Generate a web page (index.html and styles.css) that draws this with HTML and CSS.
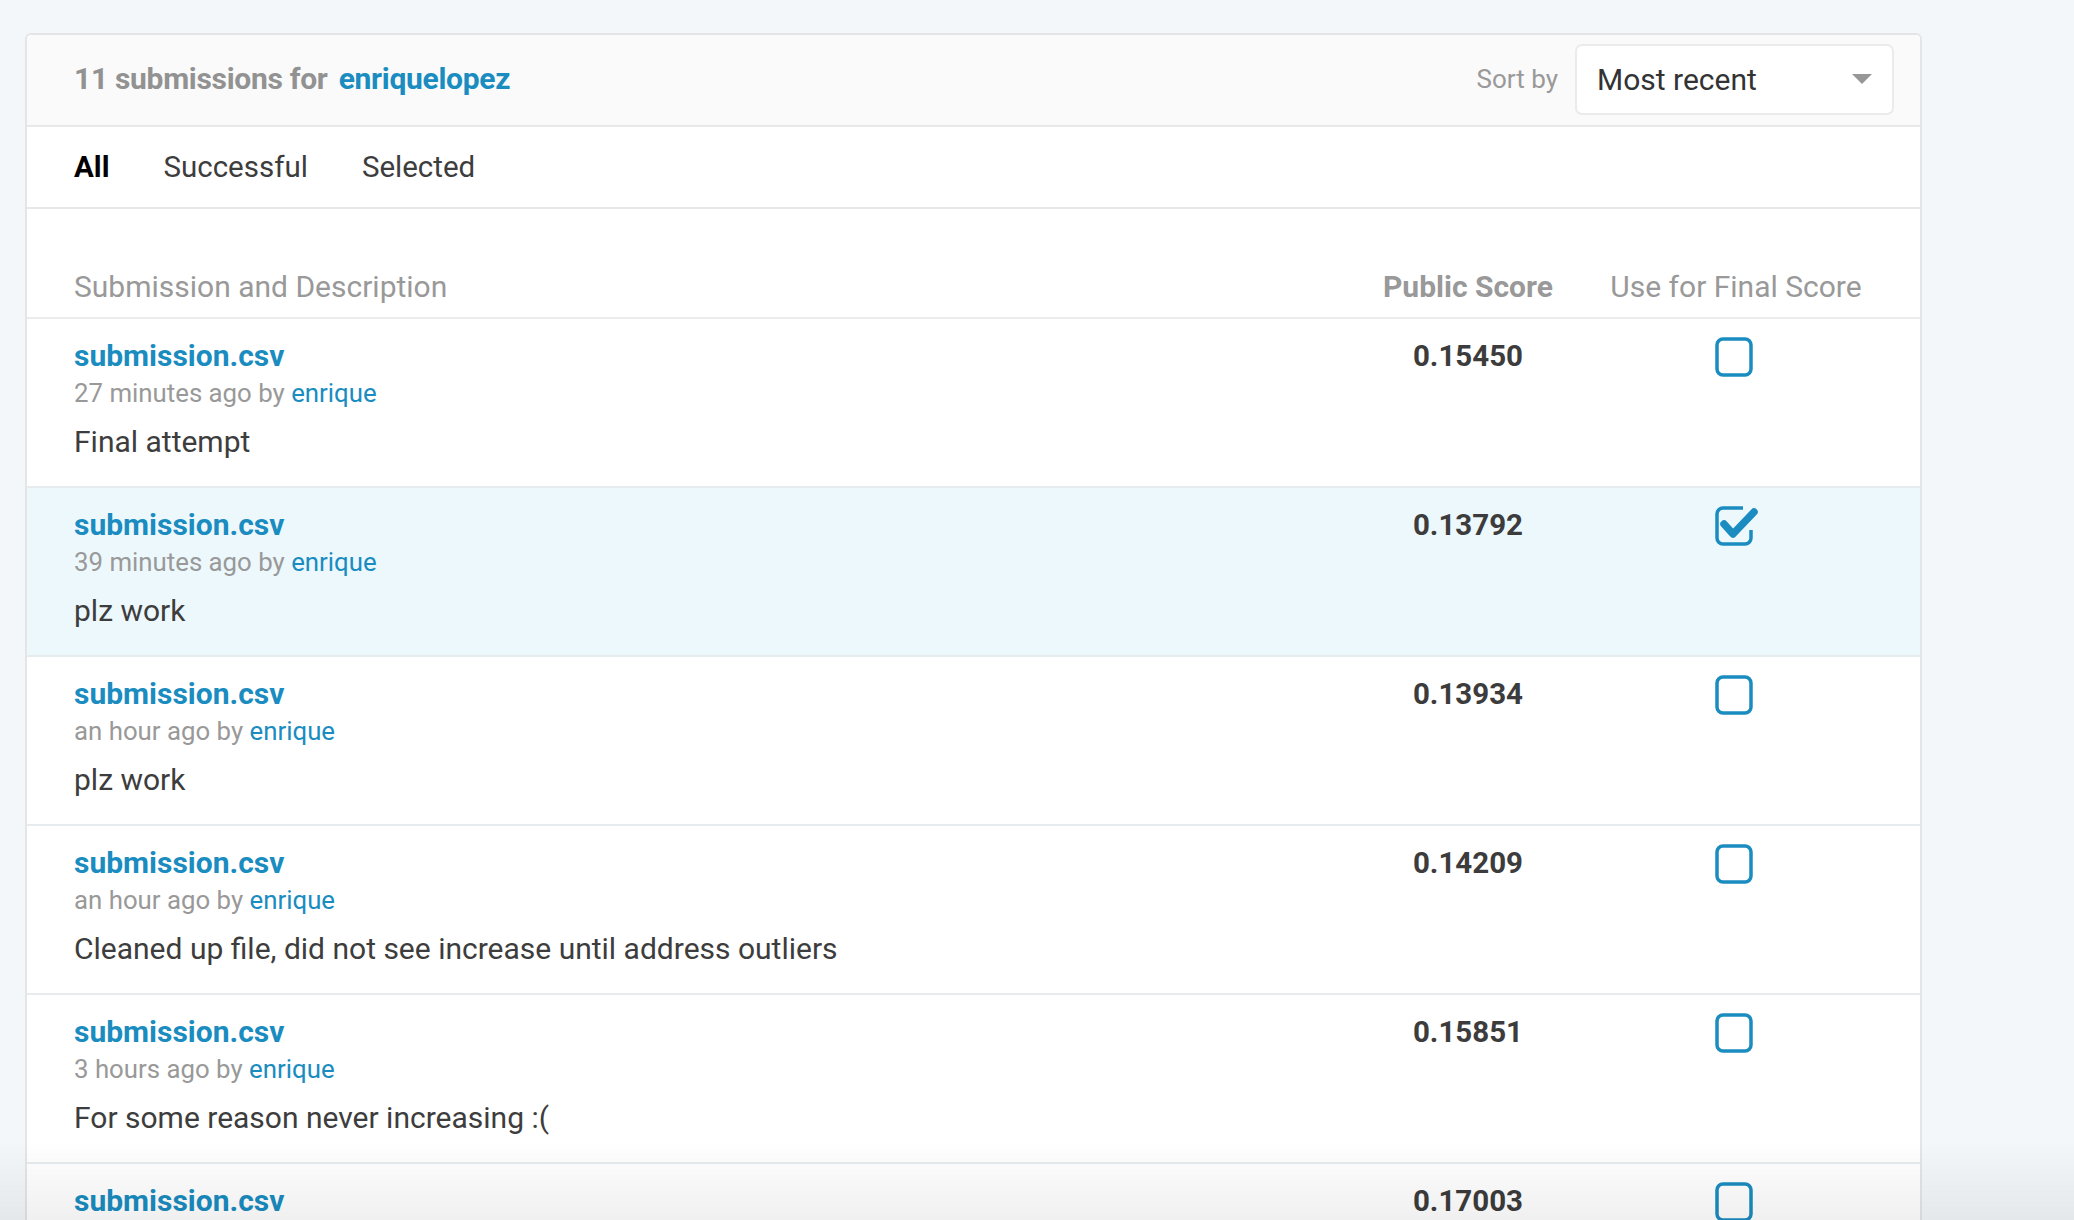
FILE: index.html
```html
<!DOCTYPE html>
<html>
<head>
<meta charset="utf-8">
<link rel="stylesheet" href="styles.css">
</head>
<body>
<div class="card">
  <div class="card-header">
    <div class="title">11 submissions for <a class="link" href="#">enriquelopez</a></div>
    <div class="sort">
      <span class="sort-label">Sort by</span>
      <div class="select">
        <span>Most recent</span>
        <span class="caret"></span>
      </div>
    </div>
  </div>
  <div class="tabs">
    <span class="tab active">All</span>
    <span class="tab">Successful</span>
    <span class="tab">Selected</span>
  </div>
  <div class="table">
    <div class="thead row-grid">
      <div>Submission and Description</div>
      <div class="th-score">Public Score</div>
      <div class="center">Use for Final Score</div>
    </div>

    <div class="row row-grid">
      <div>
        <a class="name" href="#">submission.csv</a>
        <div class="meta">27 minutes ago by <a class="link" href="#">enrique</a></div>
        <div class="desc">Final attempt</div>
      </div>
      <div class="score">0.15450</div>
      <div class="center"><svg class="cb" width="44" height="40" viewBox="0 0 44 40"><rect x="2" y="2" width="34" height="36" rx="6" fill="none" stroke="#1a8cc0" stroke-width="3.5"/></svg></div>
    </div>

    <div class="row row-grid selected">
      <div>
        <a class="name" href="#">submission.csv</a>
        <div class="meta">39 minutes ago by <a class="link" href="#">enrique</a></div>
        <div class="desc">plz work</div>
      </div>
      <div class="score">0.13792</div>
      <div class="center"><svg class="cb" width="44" height="40" viewBox="0 0 44 40"><path d="M28 2 H8 A6 6 0 0 0 2 8 V32 A6 6 0 0 0 8 38 H30 A6 6 0 0 0 36 32 V24" fill="none" stroke="#1a8cc0" stroke-width="3.5"/><path d="M9 18 L18 28 L39 6" fill="none" stroke="#1a8cc0" stroke-width="7.5" stroke-linecap="round" stroke-linejoin="round"/></svg></div>
    </div>

    <div class="row row-grid">
      <div>
        <a class="name" href="#">submission.csv</a>
        <div class="meta">an hour ago by <a class="link" href="#">enrique</a></div>
        <div class="desc">plz work</div>
      </div>
      <div class="score">0.13934</div>
      <div class="center"><svg class="cb" width="44" height="40" viewBox="0 0 44 40"><rect x="2" y="2" width="34" height="36" rx="6" fill="none" stroke="#1a8cc0" stroke-width="3.5"/></svg></div>
    </div>

    <div class="row row-grid">
      <div>
        <a class="name" href="#">submission.csv</a>
        <div class="meta">an hour ago by <a class="link" href="#">enrique</a></div>
        <div class="desc">Cleaned up file, did not see increase until address outliers</div>
      </div>
      <div class="score">0.14209</div>
      <div class="center"><svg class="cb" width="44" height="40" viewBox="0 0 44 40"><rect x="2" y="2" width="34" height="36" rx="6" fill="none" stroke="#1a8cc0" stroke-width="3.5"/></svg></div>
    </div>

    <div class="row row-grid">
      <div>
        <a class="name" href="#">submission.csv</a>
        <div class="meta">3 hours ago by <a class="link" href="#">enrique</a></div>
        <div class="desc">For some reason never increasing :(</div>
      </div>
      <div class="score">0.15851</div>
      <div class="center"><svg class="cb" width="44" height="40" viewBox="0 0 44 40"><rect x="2" y="2" width="34" height="36" rx="6" fill="none" stroke="#1a8cc0" stroke-width="3.5"/></svg></div>
    </div>

    <div class="row row-grid">
      <div>
        <a class="name" href="#">submission.csv</a>
        <div class="meta">3 hours ago by <a class="link" href="#">enrique</a></div>
        <div class="desc">Another try</div>
      </div>
      <div class="score">0.17003</div>
      <div class="center"><svg class="cb" width="44" height="40" viewBox="0 0 44 40"><rect x="2" y="2" width="34" height="36" rx="6" fill="none" stroke="#1a8cc0" stroke-width="3.5"/></svg></div>
    </div>
  </div>
</div>
<div class="fade"></div>
</body>
</html>
```

FILE: styles.css
```css
html, body {
  margin: 0;
  padding: 0;
}
body {
  background: #f4f7f9;
  font-family: Roboto, "Liberation Sans", Arial, sans-serif;
  color: #3d3d3d;
  height: 1220px;
  overflow: hidden;
  padding-top: 33px;
  padding-left: 25px;
}
a { text-decoration: none; }
.link { color: #1a8cc0; }

.card {
  width: 1897px;
  box-sizing: border-box;
  border: 2px solid #e3e6e8;
  border-radius: 6px;
  background: #fff;
}
.card-header {
  height: 92px;
  box-sizing: border-box;
  background: #fafafa;
  border-bottom: 2px solid #e8e8e8;
  border-radius: 6px 6px 0 0;
  display: flex;
  align-items: center;
  justify-content: space-between;
  padding: 0 26px 0 47px;
}
.title {
  font-size: 30px;
  font-weight: 700;
  color: #929292;
  letter-spacing: -0.3px;
  margin-top: -4px;
}
.title .link { margin-left: 4px; }
.sort {
  display: flex;
  align-items: center;
  gap: 17px;
  margin-top: -2px;
}
.sort-label {
  font-size: 26px;
  color: #999;
}
.select {
  width: 319px;
  height: 71px;
  box-sizing: border-box;
  background: #fff;
  border: 2px solid #ebebeb;
  border-radius: 7px;
  display: flex;
  align-items: center;
  justify-content: space-between;
  padding: 0 20px 0 20px;
  font-size: 30px;
  color: #333;
}
.caret {
  width: 0;
  height: 0;
  border-left: 10px solid transparent;
  border-right: 10px solid transparent;
  border-top: 10px solid #979797;
}
.tabs {
  height: 82px;
  box-sizing: border-box;
  border-bottom: 2px solid #e8e8e8;
  display: flex;
  align-items: center;
  gap: 54px;
  padding-left: 47px;
  font-size: 29.5px;
  color: #3d3d3d;
}
.tab.active {
  color: #000;
  font-weight: 700;
}
.row-grid {
  display: grid;
  grid-template-columns: 1fr 220px 316px;
  padding: 0 26px 0 47px;
}
.center { display: flex; justify-content: center; }
.thead {
  padding-top: 61px;
  padding-bottom: 13px;
  line-height: 34px;
  font-size: 30px;
  color: #999;
  border-bottom: 2px solid #ececec;
}
.th-score {
  text-align: center;
  font-weight: 700;
}
.row {
  height: 169px;
  box-sizing: border-box;
  padding-top: 18px;
  border-bottom: 2px solid #e6ebee;
}
.row.selected { background: #edf8fd; }
.name {
  display: block;
  color: #1a8cc0;
  font-size: 30px;
  font-weight: 700;
  line-height: 38px;
}
.meta {
  font-size: 25.8px;
  line-height: 36px;
  color: #999;
}
.desc {
  margin-top: 12px;
  font-size: 30px;
  line-height: 38px;
  color: #3d3d3d;
}
.score {
  text-align: center;
  font-size: 29.5px;
  font-weight: 700;
  line-height: 38px;
  color: #3c3c3c;
}
.cb {
  display: block;
  margin-left: 2px;
}
.fade {
  position: fixed;
  left: 0;
  right: 0;
  bottom: 0;
  height: 80px;
  background: linear-gradient(to bottom, rgba(0,0,0,0), rgba(0,0,0,0.06));
  pointer-events: none;
}
```
